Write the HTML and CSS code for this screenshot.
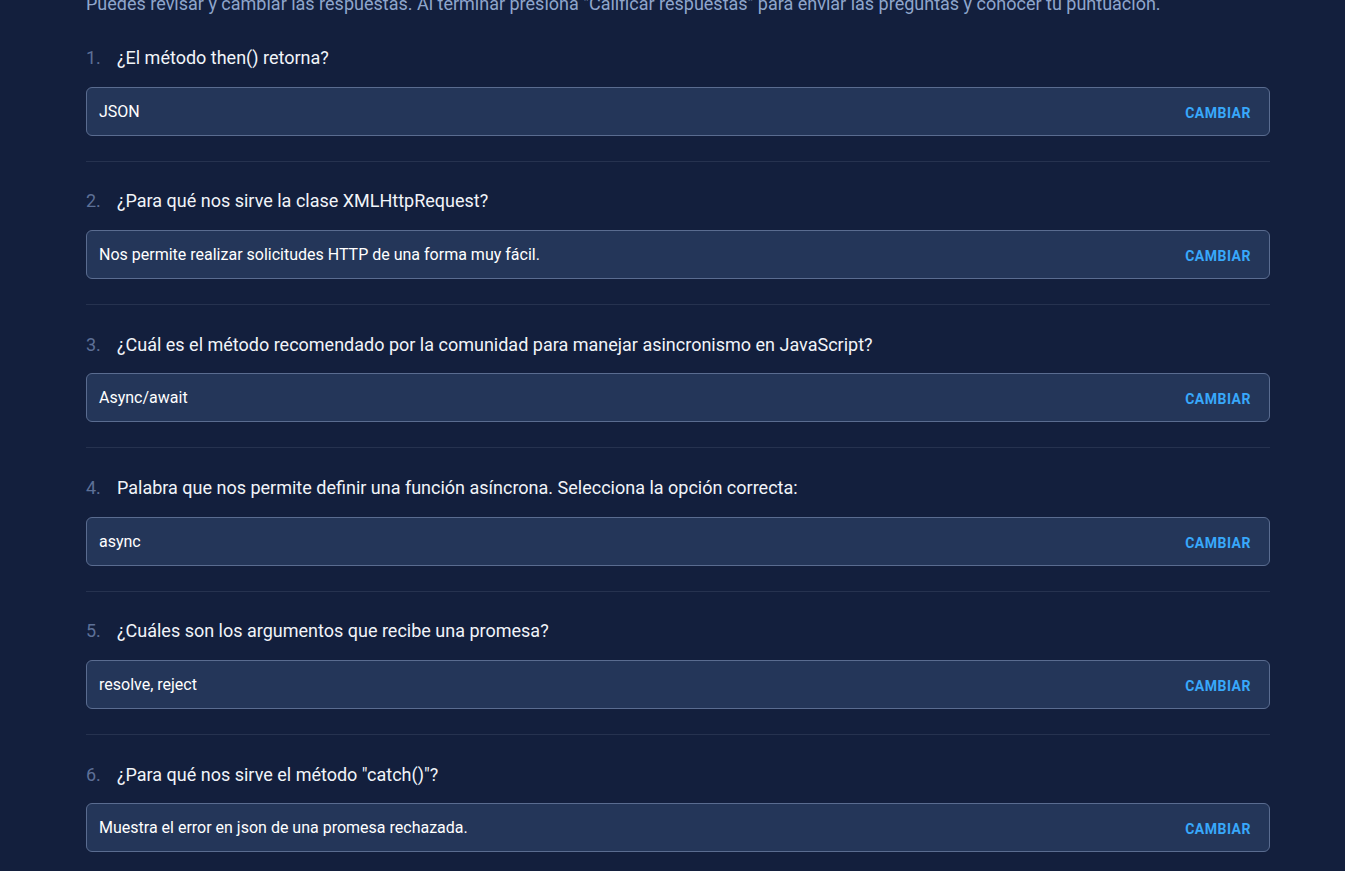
FILE: index.html
```html
<!DOCTYPE html>
<html lang="es">
<head>
<meta charset="utf-8">
<title>Revisar respuestas</title>
<link rel="stylesheet" href="styles.css">
</head>
<body>
<main class="review">
  <p class="intro">Puedes revisar y cambiar las respuestas. Al terminar presiona "Calificar respuestas" para enviar las preguntas y conocer tu puntuación.</p>
  <ol class="questions">
    <li class="question">
      <div class="question-title"><span class="num">1.</span><span class="text">¿El método then() retorna?</span></div>
      <div class="answer"><span class="answer-text">JSON</span><button class="change">CAMBIAR</button></div>
    </li>
    <li class="question">
      <div class="question-title"><span class="num">2.</span><span class="text">¿Para qué nos sirve la clase XMLHttpRequest?</span></div>
      <div class="answer"><span class="answer-text">Nos permite realizar solicitudes HTTP de una forma muy fácil.</span><button class="change">CAMBIAR</button></div>
    </li>
    <li class="question">
      <div class="question-title"><span class="num">3.</span><span class="text">¿Cuál es el método recomendado por la comunidad para manejar asincronismo en JavaScript?</span></div>
      <div class="answer"><span class="answer-text">Async/await</span><button class="change">CAMBIAR</button></div>
    </li>
    <li class="question">
      <div class="question-title"><span class="num">4.</span><span class="text">Palabra que nos permite definir una función asíncrona. Selecciona la opción correcta:</span></div>
      <div class="answer"><span class="answer-text">async</span><button class="change">CAMBIAR</button></div>
    </li>
    <li class="question">
      <div class="question-title"><span class="num">5.</span><span class="text">¿Cuáles son los argumentos que recibe una promesa?</span></div>
      <div class="answer"><span class="answer-text">resolve, reject</span><button class="change">CAMBIAR</button></div>
    </li>
    <li class="question">
      <div class="question-title"><span class="num">6.</span><span class="text">¿Para qué nos sirve el método "catch()"?</span></div>
      <div class="answer"><span class="answer-text">Muestra el error en json de una promesa rechazada.</span><button class="change">CAMBIAR</button></div>
    </li>
  </ol>
</main>
</body>
</html>
```
FILE: styles.css
```css
html, body {
  margin: 0;
  padding: 0;
  background: #131f3d;
}

body {
  font-family: Roboto, "Liberation Sans", sans-serif;
  color: #eef2f8;
  overflow: hidden;
}

.review {
  width: 1184px;
  margin: -8.15px 0 0 86px;
}

.intro {
  margin: 0 0 2.5px;
  font-size: 18px;
  line-height: 24px;
  color: #8fa6cc;
}

.questions {
  list-style: none;
  margin: 0;
  padding: 0;
}

.question {
  padding: 27.5px 0 25.08px;
  border-bottom: 1px solid #26324f;
}

.question-title {
  display: flex;
  align-items: baseline;
  font-size: 18px;
  line-height: 24px;
  margin-bottom: 16.75px;
}

.num {
  width: 31px;
  flex: none;
  color: #5d7097;
}

.text {
  color: #f1f4f9;
}

.answer {
  display: flex;
  align-items: center;
  justify-content: space-between;
  box-sizing: border-box;
  height: 49px;
  padding: 0 18px 0 12px;
  background: #243659;
  border: 1px solid #5a6c90;
  border-radius: 6px;
}

.answer-text {
  font-size: 16px;
  color: #ffffff;
}

.change {
  background: none;
  border: 0;
  padding: 3px 0 0;
  font-family: Roboto, "Liberation Sans", sans-serif;
  font-size: 14px;
  font-weight: 700;
  letter-spacing: 0.5px;
  color: #38a8fb;
  cursor: pointer;
}
```
